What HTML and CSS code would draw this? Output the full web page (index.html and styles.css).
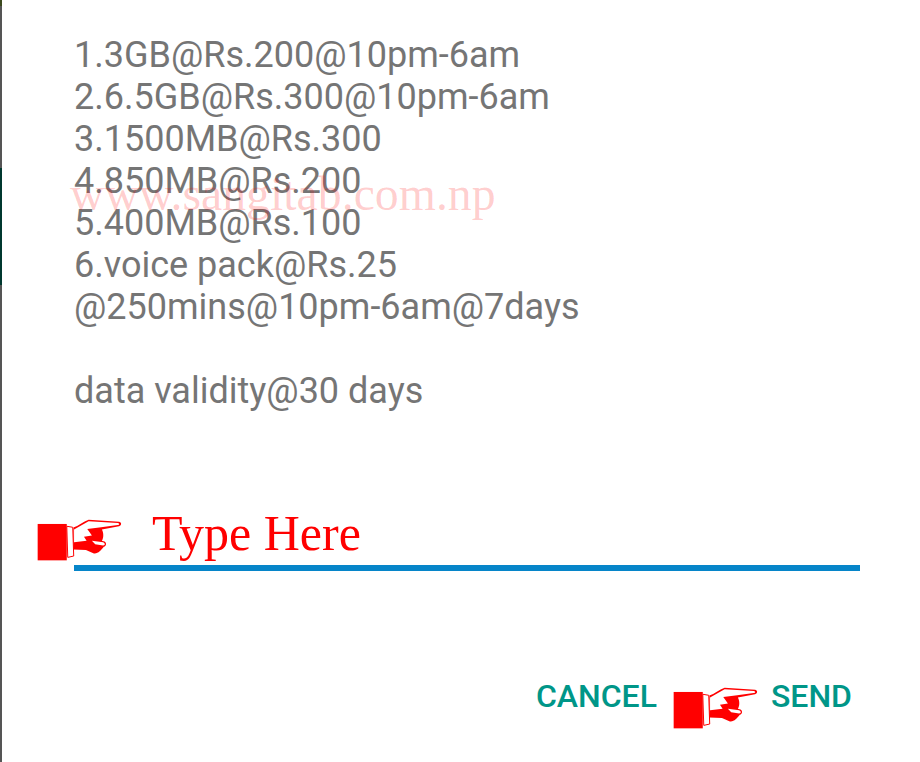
FILE: index.html
```html
<!DOCTYPE html>
<html lang="en">
<head>
  <meta charset="UTF-8" />
  <title>Data packs</title>
  <link rel="stylesheet" href="styles.css">
</head>
<body>
  <svg class="defs" width="0" height="0">
    <symbol id="hand" viewBox="20 30 260 130">
      <rect x="22" y="45" width="88" height="110" fill="#f00"/>
      <path d="M110 52 L128 55 L131 142 L113 146 Z" fill="#fff" stroke="#f00" stroke-width="3"/>
      <path d="M130 56 C145 50 160 38 176 32 L268 38 C276 40 277 48 268 52 L216 62 C222 72 222 88 216 96 L224 98 C231 102 230 112 222 114 C214 124 204 136 192 134 L168 124 L130 122 Z" fill="#f00"/>
      <path d="M132 62 L176 37 L264 42 C271 44 269 48 264 48 L214 55 L172 60 L186 80 L162 84 L170 96 L132 100 Z" fill="#fff"/>
      <path d="M186 96 L220 100 C227 103 226 109 220 110 L196 106 Z" fill="#fff"/>
    </symbol>
  </svg>

  <div class="edge">
    <span class="edge-top"></span>
    <span class="edge-upper"></span>
    <span class="edge-teal"></span>
    <span class="edge-lower"></span>
  </div>

  <main class="dialog">
    <p class="watermark">www.sangitab.com.np</p>

    <p class="message">1.3GB@Rs.200@10pm-6am<br>2.6.5GB@Rs.300@10pm-6am<br>3.1500MB@Rs.300<br>4.850MB@Rs.200<br>5.400MB@Rs.100<br>6.voice pack@Rs.25<br>@250mins@10pm-6am@7days<br><br>data validity@30 days</p>

    <div class="input-row">
      <svg class="hand"><use href="#hand"/></svg>
      <span class="hint">Type Here</span>
    </div>
    <div class="underline"></div>

    <div class="actions">
      <span class="action">CANCEL</span>
      <svg class="hand hand-send"><use href="#hand"/></svg>
      <span class="action">SEND</span>
    </div>
  </main>
</body>
</html>
```
FILE: styles.css
```css
body {
  margin: 0;
  height: 762px;
  display: flex;
  overflow: hidden;
  background-color: #fff;
  font-family: Roboto, sans-serif;
}

.defs {
  position: absolute;
}

/* sliver of the screen behind the dialog */
.edge {
  width: 2px;
  display: flex;
  flex-direction: column;
}

.edge-top {
  height: 6px;
  background-color: #3c4a1e;
}

.edge-upper {
  height: 162px;
  background-color: #555;
}

.edge-teal {
  height: 117px;
  background-color: #00382f;
}

.edge-lower {
  flex: 1;
  background-color: #555;
}

.dialog {
  flex: 1;
  position: relative;
}

.message {
  margin: 34px 0 0 72px;
  font-size: 36px;
  line-height: 42px;
  color: #757575;
}

.watermark {
  position: absolute;
  left: 68px;
  top: 167px;
  margin: 0;
  font-family: "Liberation Serif", serif;
  font-size: 47.8px;
  line-height: 54px;
  color: rgba(255, 0, 0, 0.2);
}

.input-row {
  display: flex;
  align-items: flex-end;
  height: 50px;
  margin: 100px 0 0 35px;
}

.hand {
  width: 86px;
  height: 43px;
  flex-shrink: 0;
}

.hint {
  margin: 0 0 0 29px;
  font-family: "Liberation Serif", serif;
  font-size: 50px;
  line-height: 58px;
  color: #f00;
}

.underline {
  height: 6px;
  margin: 3px 60px 0 72px;
  background-color: #0685c9;
}

.actions {
  display: flex;
  justify-content: flex-end;
  align-items: flex-start;
  margin: 103px 68px 0 0;
}

.action {
  font-size: 32px;
  font-weight: 500;
  line-height: 44px;
  color: #009688;
}

.hand-send {
  margin: 13px 12px 0 16px;
}
```
